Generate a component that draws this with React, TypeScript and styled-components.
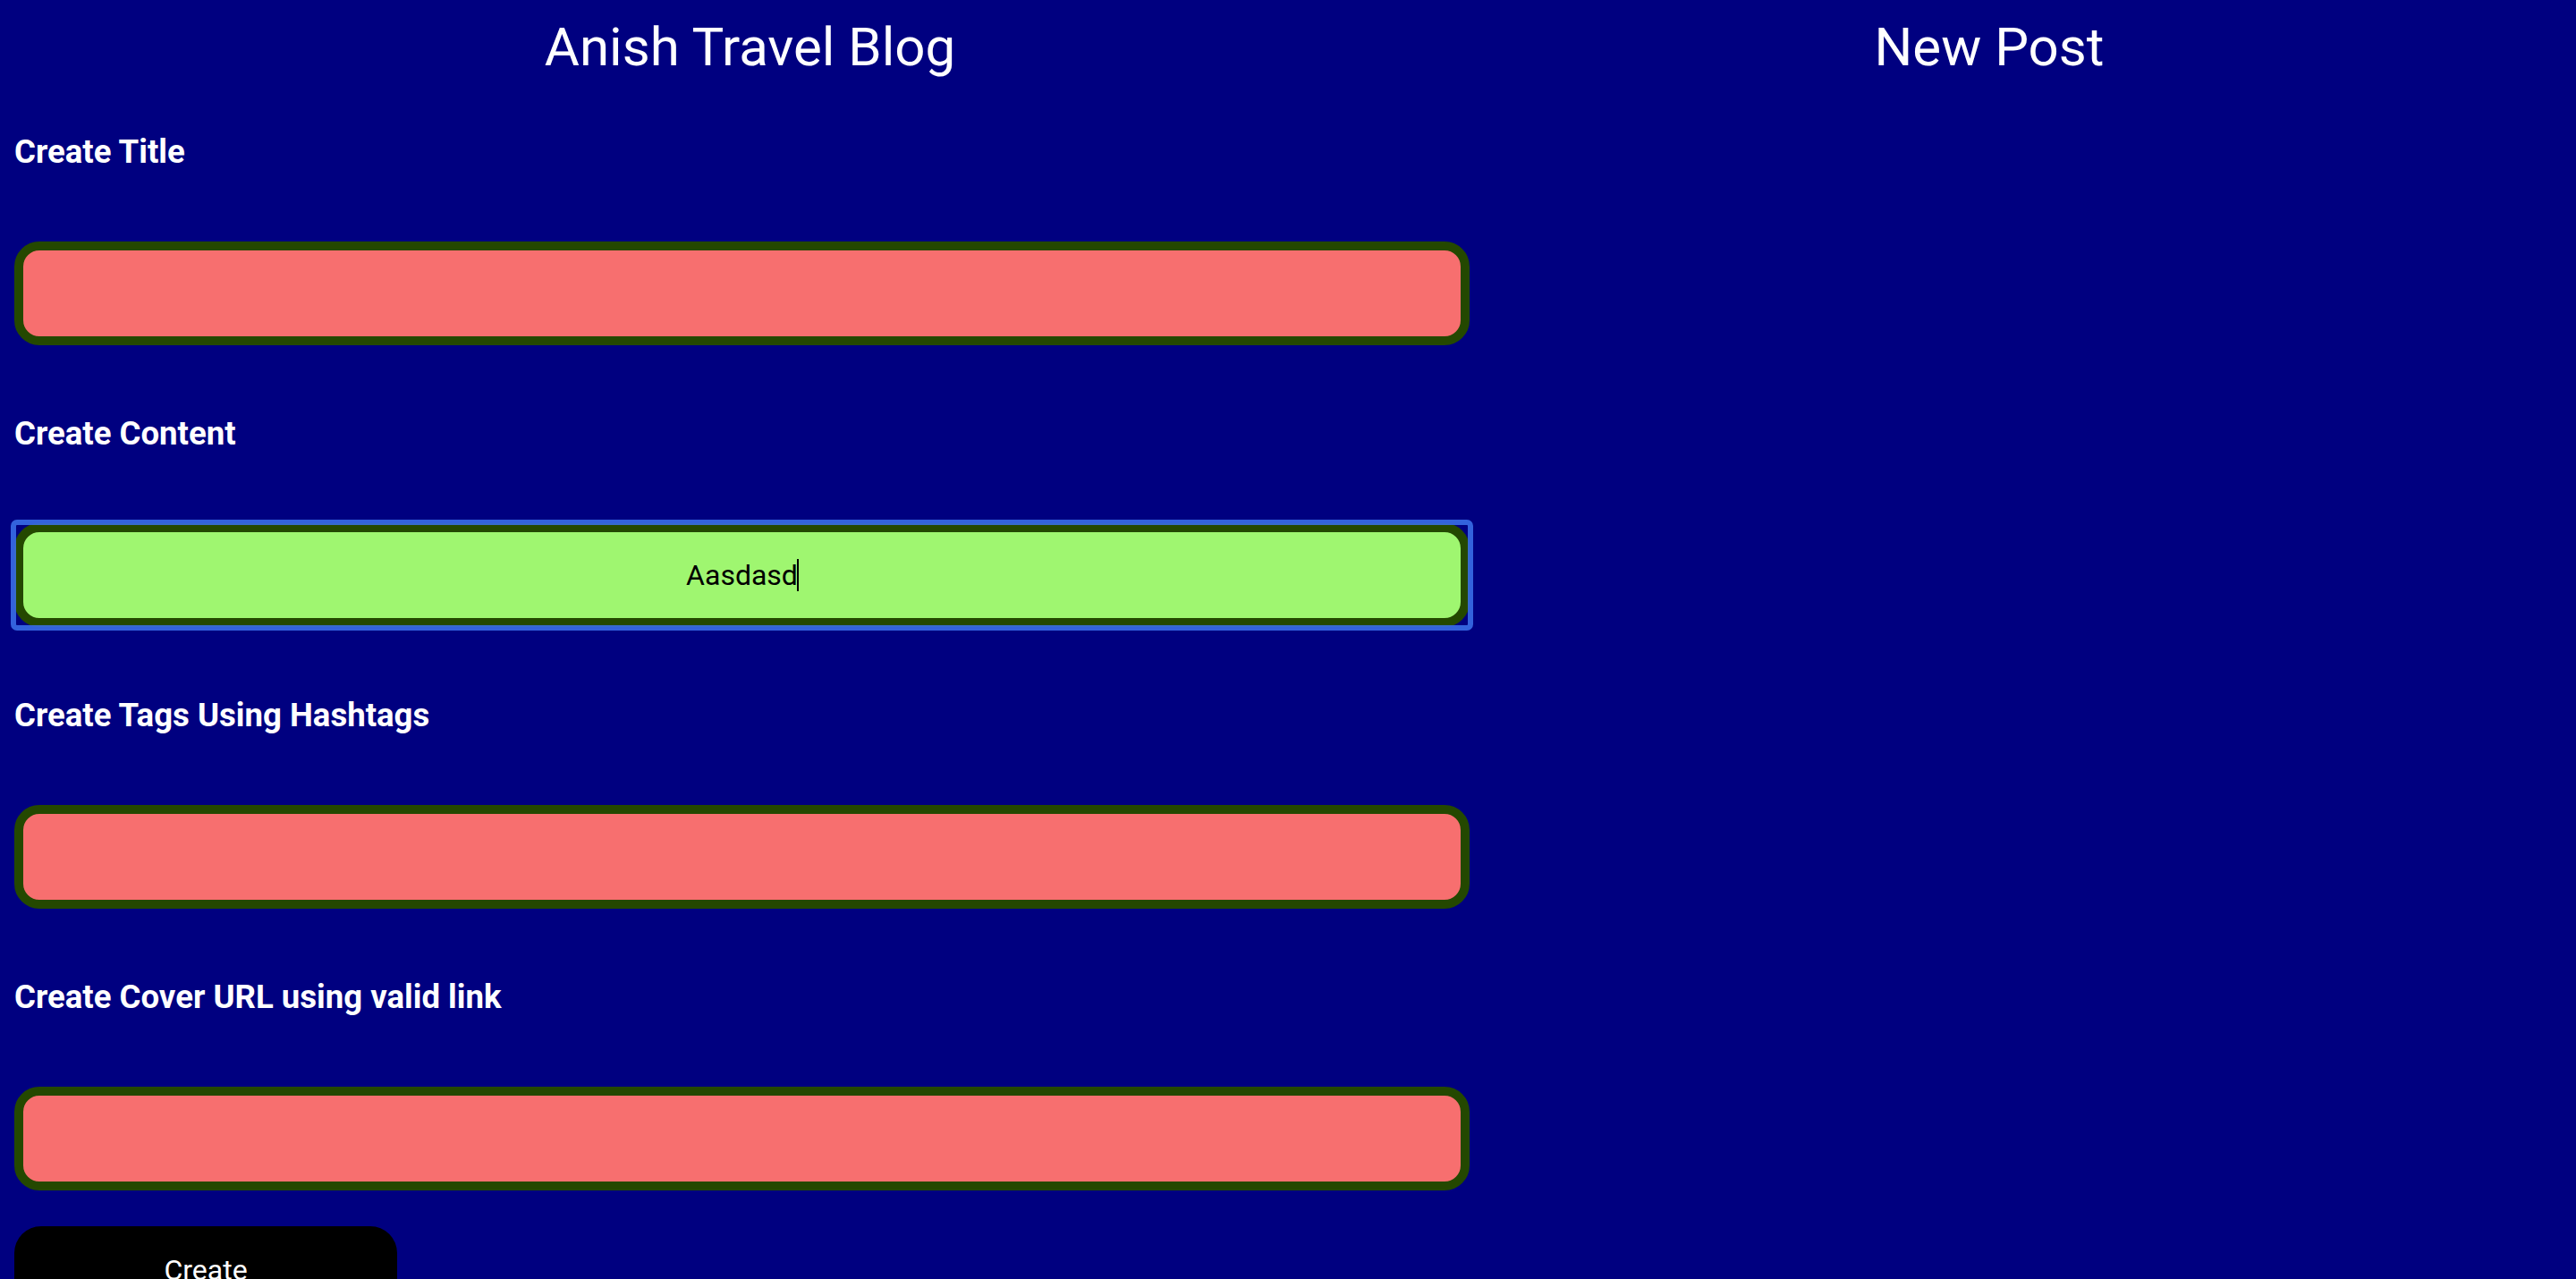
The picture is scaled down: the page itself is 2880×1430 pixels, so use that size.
import React from "react";
import styled, { createGlobalStyle } from "styled-components";

const GlobalStyle = createGlobalStyle`
  html, body {
    margin: 0;
    padding: 0;
    background: #000080;
    font-family: Roboto, "Liberation Sans", Arial, sans-serif;
  }
  * { box-sizing: border-box; }
`;

const Page = styled.div`
  display: grid;
  grid-template-columns: 1661px 1110px;
  padding: 18px 8px 0;
  min-height: 1430px;
  background: #000080;
`;

const Column = styled.section`
  display: flex;
  flex-direction: column;
  gap: 60px;
`;

const Heading = styled.h1`
  margin: 0;
  font-family: Roboto, "Liberation Sans", Arial, sans-serif;
  font-weight: 400;
  font-size: 60px;
  line-height: 70px;
  color: #ffffff;
  text-align: center;
`;

const Form = styled.form`
  display: flex;
  flex-direction: column;
  gap: 40px;
  padding-left: 8px;
`;

const Fields = styled.div`
  display: flex;
  flex-direction: column;
  gap: 77.5px;
`;

const Field = styled.div`
  display: flex;
  flex-direction: column;
  gap: 77.5px;
`;

const Label = styled.label`
  display: block;
  font-family: Roboto, "Liberation Sans", Arial, sans-serif;
  font-weight: 700;
  font-size: 36.6px;
  line-height: 44px;
  color: #ffffff;
`;

const FocusRing = styled.div<{ $active: boolean }>`
  position: relative;
  width: 1627px;
  display: flex;
  &::after {
    content: "";
    display: ${(p) => (p.$active ? "block" : "none")};
    position: absolute;
    inset: -4px;
    border: 6px solid rgba(58, 112, 232, 0.88);
    border-radius: 7px;
    pointer-events: none;
  }
`;

const Caret = styled.span`
  position: absolute;
  left: calc(50% + 61px);
  top: 50%;
  width: 2px;
  height: 36px;
  margin-top: -18px;
  background: #000000;
  pointer-events: none;
`;

const Input = styled.input<{ $filled: boolean; $focused: boolean }>`
  width: 100%;
  height: 116px;
  border: 10px solid #244800;
  border-radius: 28px;
  background: ${(p) => (p.$filled ? "#9ff670" : "#f76f6f")};
  font-family: Roboto, "Liberation Sans", Arial, sans-serif;
  font-size: 32px;
  color: #000000;
  text-align: center;
  outline: none;
  padding: 0 8px;
  caret-color: ${(p) => (p.$focused ? "transparent" : "#000000")};
`;

const CreateButton = styled.button`
  width: 428px;
  padding: 31px 0;
  border: none;
  border-radius: 30px;
  background: #000000;
  color: #ffffff;
  font-family: Roboto, "Liberation Sans", Arial, sans-serif;
  font-size: 32px;
  line-height: 37.5px;
  cursor: pointer;
`;

const fields = [
  { label: "Create Title", value: "" },
  { label: "Create Content", value: "Aasdasd", focused: true },
  { label: "Create Tags Using Hashtags", value: "" },
  { label: "Create Cover URL using valid link", value: "" },
];

export default function App() {
  return (
    <>
      <GlobalStyle />
      <Page>
        <Column>
          <Heading>Anish Travel Blog</Heading>
          <Form onSubmit={(e) => e.preventDefault()}>
            <Fields>
              {fields.map((f, i) => (
                <Field key={i}>
                  <Label htmlFor={`field-${i}`}>{f.label}</Label>
                  <FocusRing $active={!!f.focused}>
                    <Input
                      id={`field-${i}`}
                      $filled={f.value.length > 0}
                      $focused={!!f.focused}
                      defaultValue={f.value}
                    />
                    {f.focused && <Caret />}
                  </FocusRing>
                </Field>
              ))}
            </Fields>
            <CreateButton type="submit">Create</CreateButton>
          </Form>
        </Column>
        <Column>
          <Heading>New Post</Heading>
        </Column>
      </Page>
    </>
  );
}
